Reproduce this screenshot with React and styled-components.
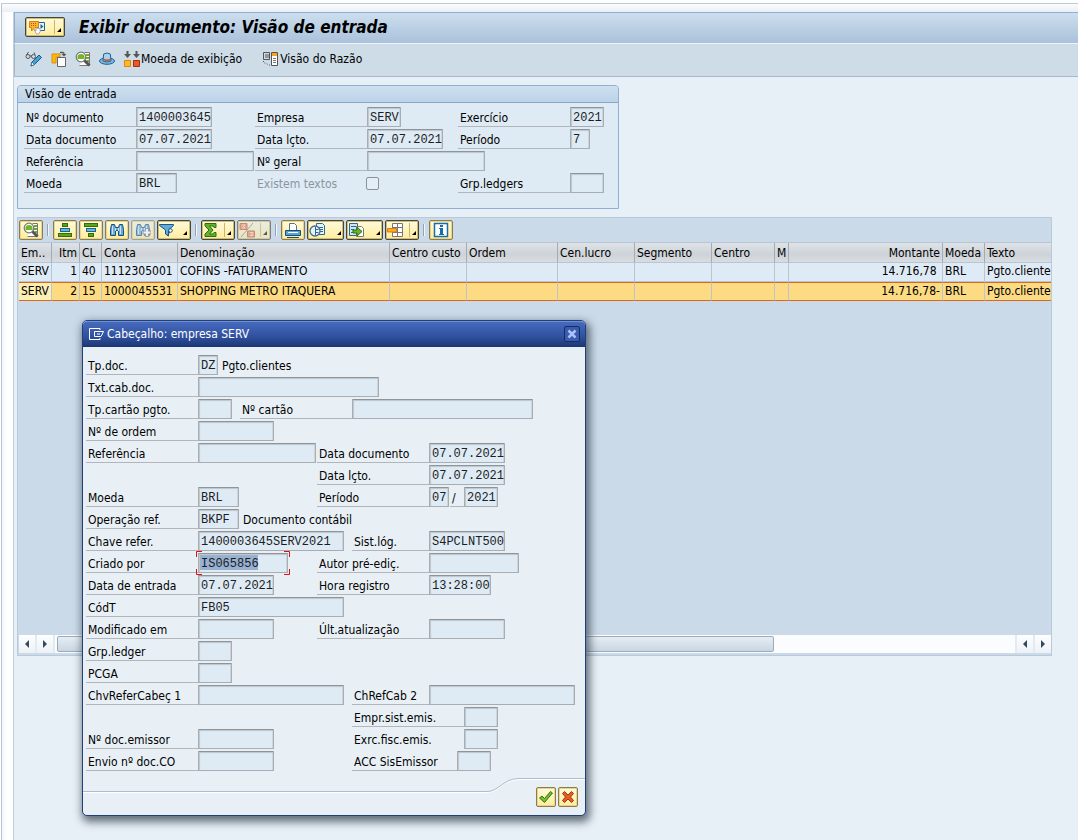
import React from "react";
import styled, { createGlobalStyle, css } from "styled-components";

const Global = createGlobalStyle`
  *, *::before, *::after { box-sizing: border-box; }
  body {
    margin: 0;
    background: #e8f0f7;
    color: #000;
    font: 12px/16px "DejaVu Sans Condensed", "Noto Sans", sans-serif;
  }
  button, input { font: inherit; color: inherit; }
`;

/* ---------- page frame ---------- */

const Page = styled.div`
  position: relative;
  display: flex;
  flex-direction: column;
  min-height: 100vh;
  padding: 3px 0 0 1px;
  background: #fff;
`;

const Frame = styled.div`
  flex: 1;
  display: flex;
  padding: 8px 0 0 11px;
  border-top: 1px solid #c3c9d2;
  border-left: 1px solid #b9c2d0;
  background: linear-gradient(#fbfcfe, #e9eff6 8px, transparent 8px),
    linear-gradient(90deg, #f3f7fb, #fff 6px);
`;

const Window = styled.main`
  flex: 1;
  min-width: 0;
  border-left: 1px solid #c2cfdd;
  background: #e8f0f7;
`;

const TitleBar = styled.header`
  display: flex;
  align-items: center;
  gap: 14px;
  height: 31px;
  padding: 0 10px 2px;
  border: 1px solid #93aecb;
  border-width: 1px 0 0 1px;
  background: linear-gradient(#cddfee, #aac1db);
`;

const Title = styled.h1`
  margin: 0;
  font-size: 17px;
  line-height: 20px;
  font-weight: bold;
  font-style: italic;
  white-space: nowrap;
`;

const AppBar = styled.nav`
  display: flex;
  align-items: center;
  gap: 8px;
  height: 34px;
  padding: 0 10px 2px;
  border: 1px solid #a5b9cd;
  border-top-color: #eef4f9;
  border-right: 0;
  background: #cedce8;
`;

const FlatButton = styled.button`
  display: flex;
  align-items: center;
  gap: ${(p) => p.$gap || 0}px;
  margin-right: ${(p) => (p.$wide ? 12 : 0)}px;
  padding: 0;
  border: 0;
  background: none;
  white-space: nowrap;
`;

const Content = styled.div`
  display: flex;
  flex-direction: column;
  align-items: flex-start;
  gap: 8px;
  padding: 8px 26px 0 3px;
`;

/* ---------- yellow buttons ---------- */

const YellowButton = styled.button`
  display: flex;
  align-items: center;
  justify-content: center;
  width: ${(p) => p.$w || 24}px;
  height: 20px;
  padding: 0;
  border: 1px solid ${(p) => (p.$dark ? "#4a4636" : "#8b7c50")};
  border-radius: 2px;
  background: linear-gradient(#fffbdc, #ffec9c);
  box-shadow: inset 0 0 0 1px ${(p) => (p.$dark ? "#cdbb78" : "#e8d48a")};
  opacity: ${(p) => (p.disabled ? 0.6 : 1)};
`;

const SplitMark = styled.span`
  display: flex;
  align-items: flex-end;
  justify-content: flex-end;
  width: 9px;
  height: 14px;
  margin-left: ${(p) => p.$gap || 0}px;
  padding: 0 2px 2px 0;
  border-left: 1px solid ${(p) => (p.$line ? "#c9b469" : "transparent")};

  &::after {
    content: "";
    border: 2px solid #000;
    border-top-color: transparent;
    border-left-color: transparent;
  }
`;

/* ---------- form fields on a 7px character grid ---------- */

const Fields = styled.div`
  display: grid;
  grid-template-columns: repeat(${(p) => p.$cols}, 7px);
  grid-auto-rows: 20px;
  row-gap: 2px;
`;

const Label = styled.label`
  grid-row: ${(p) => p.$row};
  grid-column: ${(p) => p.$at + 1} / span ${(p) => p.$span};
  padding: 3px 0 0 2px;
  border-bottom: 1px solid ${(p) => (p.$plain ? "transparent" : "#b2b6ba")};
  color: ${(p) => (p.$dim ? "#8b959f" : "#000")};
  white-space: nowrap;
`;

const Input = styled.input`
  grid-row: ${(p) => p.$row};
  grid-column-start: ${(p) => p.$at + 1};
  width: ${(p) => p.$chars * 7 + 6}px;
  height: 20px;
  padding: 1px 0 0 2px;
  border: 1px solid #a9adb1;
  border-top-color: #8f9498;
  border-radius: 1px;
  outline: 0;
  background-color: #deebf5;
  box-shadow: inset 1px 1px 1px #bcc6ce, inset -1px 0 0 #cdd6dd;
  color: #1c1c24;
  font-family: "Liberation Mono", monospace;
  font-size: 12px;
  ${(p) =>
    p.$selected &&
    css`
      background-image: linear-gradient(#97b1d1, #97b1d1);
      background-repeat: no-repeat;
      background-position: 1px 1px;
      background-size: 58px 15px;
    `}
`;

const Note = styled.span`
  grid-row: ${(p) => p.$row};
  grid-column-start: ${(p) => p.$at + 1};
  padding: 3px 0 0 3px;
  white-space: nowrap;
`;

const Tick = styled.input`
  appearance: none;
  grid-row: ${(p) => p.$row};
  grid-column-start: ${(p) => p.$at + 1};
  width: 13px;
  height: 13px;
  margin: 4px 0 0 -1px;
  border: 1px solid #8d9297;
  border-radius: 2px;
  background: #e3eef6;
`;

const FocusFrame = styled.span`
  grid-row: ${(p) => p.$row};
  grid-column-start: ${(p) => p.$at + 1};
  width: 94px;
  height: 24px;
  margin: -2px;
  pointer-events: none;
  z-index: 1;

  svg { display: block; }
`;

function Field({ id, row, at, span, text, inputAt, chars, value = "", selected, plain }) {
  return (
    <>
      <Label htmlFor={id} $row={row} $at={at} $span={span} $plain={plain}>{text}</Label>
      <Input id={id} readOnly value={value} $row={row} $at={inputAt ?? at + span} $chars={chars} $selected={selected} />
    </>
  );
}

const Group = styled.section`
  padding-bottom: 15px;
  border: 1px solid #8fb0d0;
  border-radius: 4px 4px 0 0;
  background: #deeaf4;
`;

const GroupTitle = styled.h2`
  height: 17px;
  margin: 0 0 4px;
  padding: 0 7px;
  border-bottom: 1px solid #86a8ca;
  border-radius: 3px 3px 0 0;
  background: linear-gradient(#cfe0ef, #bcd3e8);
  font-size: 12px;
  line-height: 16px;
  font-weight: normal;
`;

const GroupBody = styled.div`
  padding: 0 6px;
`;

/* ---------- line item grid ---------- */

const GridPanel = styled.section`
  width: 100%;
  padding-left: 1px;
  border: 1px solid #b9c9d9;
  background: #cbdae9;
`;

const GridBar = styled.div`
  display: flex;
  align-items: center;
  gap: 2px;
  height: 25px;
  border-bottom: 1px solid #b7c6d6;
`;

const Divider = styled.span`
  width: 2px;
  height: 12px;
  margin: 0 2px;
  border-left: 1px solid #93a3b3;
  border-right: 1px solid #f1f6fb;
`;

const Table = styled.table`
  width: 100%;
  table-layout: fixed;
  border-collapse: separate;
  border-spacing: 0;

  th, td {
    padding: 0 2px;
    overflow: hidden;
    font-weight: normal;
    text-align: left;
    white-space: pre;
    text-overflow: clip;
    border-right: 1px solid #b9c6d2;
  }
  th:last-child, td:last-child { border-right: 0; }
`;

const HeadCell = styled.th`
  height: 20px;
  border-bottom: 1px solid #b9c6d2;
  background: linear-gradient(#dfe3e7, #cdd3d9 60%, #d9dde1);
  && {
    text-align: ${(p) => (p.$right ? "right" : "left")};
    border-right-color: #a3acb5;
  }
`;

const Cell = styled.td`
  && { text-align: ${(p) => (p.$right ? "right" : "left")}; }
`;

const Row = styled.tr`
  td {
    height: 19px;
    line-height: 16px;
    padding-bottom: ${(p) => (p.$active ? 1 : 2)}px;
    background: ${(p) => (p.$active ? "#fcdb83" : "#deebf6")};
    border-top: ${(p) => (p.$active ? "1px solid #d9681f" : "0")};
    border-bottom: 1px solid ${(p) => (p.$active ? "#d9681f" : "#b9c6d2")};
  }
  td:first-child { background: ${(p) => (p.$active ? "#fdeeb4" : "#deebf6")}; }
`;

const GridSpace = styled.div`
  height: 334px;
`;

const ScrollBar = styled.div`
  display: flex;
  gap: 2px;
  height: 18px;
  margin-bottom: 2px;
  background: #e2eaf2;
`;

const ScrollButton = styled.button`
  display: flex;
  align-items: center;
  justify-content: center;
  width: 16px;
  height: 18px;
  padding: 0;
  border: 0;
  background: linear-gradient(#fdfeff, #edf2f7);
`;

const Track = styled.div`
  flex: 1;
  padding: 1px 2px;
  background: #fbfcfe;
`;

const Thumb = styled.div`
  width: 75%;
  height: 16px;
  border: 1px solid #9dabb9;
  border-radius: 2px;
  background: linear-gradient(#e6edf4, #c9d6e2);
`;

/* ---------- dialog ---------- */

const Dialog = styled.section`
  position: absolute;
  left: 82px;
  top: 320px;
  width: 504px;
  border: 1px solid #213f7d;
  border-radius: 5px;
  background: #e8f0f6;
  box-shadow: 2px 4px 9px 2px rgba(40, 55, 70, 0.7);
`;

const DialogTitle = styled.header`
  display: flex;
  align-items: center;
  gap: 2px;
  height: 26px;
  padding: 0 5px 2px 6px;
  border-top: 1px solid #7090d0;
  border-radius: 4px 4px 0 0;
  background: linear-gradient(#466abf, #2f509d 60%, #1c3674);
  color: #fff;

  h2 {
    flex: 1;
    margin: 0;
    font-size: 12px;
    font-weight: normal;
  }
`;

const CloseButton = styled.button`
  display: flex;
  align-items: center;
  justify-content: center;
  width: 16px;
  height: 16px;
  padding: 0;
  border: 1px solid #142c66;
  border-radius: 2px;
  background: #3a5cab;
`;

const DialogBody = styled.div`
  padding: 8px 3px 7px;
`;

const Footer = styled.footer`
  display: flex;
  height: 37px;
`;

const FooterLine = styled.div`
  flex: 1;
  margin-top: 13px;
  border-top: 1px solid #aebccd;
  box-shadow: inset 0 1px 0 #fff;
`;

const FooterActions = styled.div`
  display: flex;
  gap: 2px;
  padding: 8px 7px 0 17px;
  border-top: 1px solid #aebccd;
  box-shadow: inset 0 1px 0 #fff;
`;

/* ---------- icons ---------- */

const Svg = ({ w = 16, h = 16, children }) => (
  <svg width={w} height={h} viewBox={`0 0 ${w} ${h}`} fill="none" aria-hidden="true">{children}</svg>
);

const MenuIcon = () => (
  <Svg w={18}>
    <path d="M10.500 3.500h6v8h-6z" fill="#e9f4fb" stroke="#16689f" />
    <path d="M12.500 5l3 2.500-3 2.500z" fill="#16689f" />
    <path d="M1.500 2.500h9v6H7L3.500 12V8.500h-2z" fill="#fbb62c" stroke="#e07a12" />
    <path d="M3 4.500h1m1 0h1m1 0h1M3 6.500h1m1 0h1m1 0h1" stroke="#b5570a" />
    <path d="M6 10.500l2 1.500V8.500l1.500 1 1.500-.5 1.500 3-2 3H8.500z" fill="#fff" stroke="#888" strokeWidth=".7" />
  </Svg>
);
const GlassesIcon = () => (
  <Svg w={18}>
    <path d="M1.500 4l2-3M10 4L9 1.500M5 5h2" stroke="#555" />
    <circle cx="3" cy="5.500" r="2" stroke="#555" /><circle cx="8.500" cy="5.500" r="2" stroke="#555" />
    <path d="M6 15l1-4 7-7 2.500 2.500-7 7z" fill="#4ba0cf" stroke="#155b8c" />
    <path d="M6 15l1-4 2.500 2.500z" fill="#fff" stroke="#155b8c" strokeWidth=".7" />
  </Svg>
);
const OtherDocIcon = () => (
  <Svg>
    <path d="M1 3h8v3H5v6H1z" fill="#fdb913" stroke="#e38b00" />
    <path d="M6.500 6.500h8v9h-8z" fill="#fff" stroke="#666" />
    <path d="M9 1.500h3q1 0 1 2" stroke="#555" strokeWidth="1.400" /><path d="M10.500 3h5L13 5.500z" fill="#555" />
  </Svg>
);
const DetailIcon = () => (
  <Svg>
    <path d="M9.500 1.500h5v13h-10" fill="#fff" stroke="#777" />
    <path d="M11 4h3m-3 3h3m-2 3h2" stroke="#73a82d" strokeWidth="2" />
    <circle cx="6" cy="6" r="4.800" fill="#fff" stroke="#777" strokeWidth="1.200" />
    <path d="M2.500 5.500q0-2.500 3.500-2.500t3.500 2.500v2.500h-7z" fill="#72b72b" />
    <path d="M9.500 9.500l5 5" stroke="#555" strokeWidth="3" />
  </Svg>
);
const HatIcon = () => (
  <Svg>
    <ellipse cx="8" cy="10" rx="7.500" ry="3.300" fill="#78b7df" stroke="#17659a" />
    <path d="M4 10l.7-7q3.300-2 6.600 0l.7 7q-4 2-8 0z" fill="#a9d3ed" stroke="#17659a" />
    <path d="M4.500 8.500q3.500 1.500 7 0" stroke="#d34c27" strokeWidth="1.600" />
  </Svg>
);
const CurrencyIcon = () => (
  <Svg w={18}>
    <path d="M4.500 0v4M13.500 0v4" stroke="#555" strokeWidth="2" />
    <path d="M1 3h7L4.500 7zM10 3h7l-3.500 4z" fill="#555" />
    <path d="M1.500 9.500h6v6h-6z" fill="#fdb92c" stroke="#df8500" />
    <path d="M10.500 9.500h6v6h-6z" fill="#e65c22" stroke="#a62c0c" />
  </Svg>
);
const LedgerIcon = () => (
  <Svg>
    <path d="M1.500 1.500h6v7h-6zM3 4h4M3 6h4" stroke="#555" />
    <path d="M9.500 1.500h6v13h-6z" fill="#fff" stroke="#555" /><path d="M10 2h5v3h-5z" fill="#f8a51b" />
    <path d="M11 7.500h3m-3 2h3m-3 2h3" stroke="#777" />
    <path d="M1.500 10v1.500l7 3" stroke="#555" strokeDasharray="1 1.500" />
  </Svg>
);
const Bars = ({ ys, ws }) => (
  <Svg>
    {ys.map((y, i) => (
      <rect key={y} x={8 - ws[i] / 2} y={y + 0.5} width={ws[i]} height="3" fill={i === 1 ? "#6cb6dd" : "#58a51e"} stroke={i === 1 ? "#1a648f" : "#2e6d10"} />
    ))}
  </Svg>
);
const BinocularsIcon = ({ more }) => (
  <Svg>
    <path d="M2.500 2.500h3l1 3h3l1-3h3l1 5v6h-5v-5h-3v5h-5v-6z" fill="#69acd8" stroke="#164f7d" />
    <path d="M3.500 4v8m3-6v3m3-3v3m2-5v8" stroke="#c8e4f4" />
    {more && <path d="M12 6v9M7.500 10.500h9" stroke="#777" strokeWidth="4" />}
    {more && <path d="M12 7v7M8.500 10.500h7" stroke="#fff" strokeWidth="2" />}
  </Svg>
);
const FilterIcon = () => (
  <Svg>
    <path d="M.5 2.500h14v1L9.500 8v6l-3-2V8L.5 3.500z" fill="#62aadb" stroke="#175887" />
    <circle cx="11.500" cy="8.500" r="1.800" fill="#fff" stroke="#175887" /><path d="M10.500 10l-2 4" stroke="#175887" />
  </Svg>
);
const SumIcon = () => (
  <Svg><path d="M2 1.500h11v4h-2l-1-1.500H6.500L10 8l-3.500 4H10l1-1.500h2v4H2v-2.500L6 8 2 4z" fill="#62b12b" stroke="#2d6e0f" /></Svg>
);
const SubtotalIcon = () => (
  <Svg>
    <path d="M1 1.500h7v6H1zM8.500 9h7v6h-7z" fill="#f28b50" stroke="#cc5420" />
    <path d="M3 3h3L4.500 4.500 6 6H3m8 4.500h3L12.500 12l1.500 1.500h-3" stroke="#fbd5b8" />
    <path d="M14 1L2 15" stroke="#888" />
  </Svg>
);
const PrintIcon = () => (
  <Svg>
    <path d="M4.500 8V1.500h5l2 2V8" fill="#fff" stroke="#5c7288" />
    <path d="M.5 8.500h15v5H.5z" fill="#5aa3d3" stroke="#174f7a" /><path d="M3 10.500h10" stroke="#fff" />
    <path d="M2 15.500h12" stroke="#174f7a" />
  </Svg>
);
const ViewIcon = () => (
  <Svg w={17}>
    <path d="M7.500 1.500h6l2 2v9h-8z" fill="#e6f3fb" stroke="#236b9d" /><path d="M10 5.500h4m-3 2h3m-3 2h3" stroke="#236b9d" />
    <circle cx="6" cy="9" r="5" fill="#e4f2fa" stroke="#4b6d85" strokeWidth="1.300" />
    <path d="M6.500 5v8" stroke="#236b9d" /><path d="M7 7.500h2.500M7 10.500h2.500" stroke="#236b9d" />
  </Svg>
);
const ExportIcon = () => (
  <Svg w={17}>
    <path d="M1.500 1.500h8v12h-8z" fill="#cee6f4" stroke="#236b9d" /><path d="M3 4.500h5M3 7.500h3M3 10.500h2" stroke="#236b9d" />
    <path d="M8.500 4.500h5l2 2v8h-7z" fill="#fff" stroke="#777" />
    <path d="M5 8h4V5l5 4.500L9 14v-3H5z" fill="#68b52c" stroke="#2c710e" />
  </Svg>
);
const LayoutIcon = () => (
  <Svg w={17}>
    <path d="M5.500 1.500h10v13h-10zM10.500 1v13M5 5.500h11M5 10.500h11" fill="#fff" stroke="#777" />
    <path d="M.5 6.500h9v3.500h-9z" fill="#fbae26" stroke="#df7b0b" />
  </Svg>
);
const InfoIcon = () => (
  <Svg>
    <path d="M1.500 1.500h13v13h-13z" fill="#fff" stroke="#156eaa" strokeWidth="1.500" />
    <path d="M7 3h3v2H7zM6 6h4v6h1v1H6v-1h1V7H6z" fill="#156eaa" />
  </Svg>
);
const DialogIcon = () => (
  <Svg>
    <path d="M11 4V2.500H.5v11H11V12" stroke="#fff" /><path d="M14.500 5.500h-9v5H12z" stroke="#fff" /><path d="M8 8h3" stroke="#fff" />
  </Svg>
);
const CrossIcon = () => (
  <Svg w={10} h={10}><path d="M1.500 1.500l7 7M8.500 1.500l-7 7" stroke="#a9c4ff" strokeWidth="2.500" /></Svg>
);
const OkIcon = () => (
  <Svg><path d="M1.500 9l2.500-2 2.500 2.500L12.500 2.500l2 1.500-8 9.500z" fill="#75bd2e" stroke="#347512" /></Svg>
);
const CancelIcon = () => (
  <Svg><path d="M2.500 4.500l2-2L8 6l3.500-3.500 2 2L10.500 8l3 3.500-2 2L8 10l-3.500 3.500-2-2 3-3.500z" fill="#e55b22" stroke="#a5330d" /></Svg>
);
const Arrow = ({ right }) => (
  <Svg w={6} h={8}><path d={right ? "M1 0l4 4-4 4z" : "M5 0L1 4l4 4z"} fill="#34495c" /></Svg>
);

/* ---------- data ---------- */

const columns = [
  ["Em‥", 33], ["Itm", 28, true], ["CL", 22], ["Conta", 76], ["Denominação", 212], ["Centro custo", 77],
  ["Ordem", 91], ["Cen.lucro", 77], ["Segmento", 77], ["Centro", 63], ["M", 14], ["Montante", 154, true],
  ["Moeda", 42], ["Texto", null],
];

const items = [
  ["SERV", "1", "40", "1112305001", "COFINS -FATURAMENTO", "", "", "", "", "", "", "14.716,78\u00a0", "BRL", "Pgto.clientes"],
  ["SERV", "2", "15", "1000045531", "SHOPPING METRO ITAQUERA", "", "", "", "", "", "", "14.716,78-", "BRL", "Pgto.clientes"],
];

const headerFields = [
  { row: 1, at: 0, span: 16, text: "Nº documento", chars: 10, value: "1400003645" },
  { row: 1, at: 33, span: 16, text: "Empresa", chars: 4, value: "SERV" },
  { row: 1, at: 62, span: 16, text: "Exercício", chars: 4, value: "2021" },
  { row: 2, at: 0, span: 16, text: "Data documento", chars: 10, value: "07.07.2021" },
  { row: 2, at: 33, span: 16, text: "Data lçto.", chars: 10, value: "07.07.2021" },
  { row: 2, at: 62, span: 16, text: "Período", chars: 2, value: "7" },
  { row: 3, at: 0, span: 16, text: "Referência", chars: 16 },
  { row: 3, at: 33, span: 16, text: "Nº geral", chars: 16 },
  { row: 4, at: 0, span: 16, text: "Moeda", chars: 5, value: "BRL" },
  { row: 4, at: 62, span: 16, text: "Grp.ledgers", chars: 4 },
];

const dialogFields = [
  { row: 1, at: 0, span: 16, text: "Tp.doc.", chars: 2, value: "DZ" },
  { row: 2, at: 0, span: 16, text: "Txt.cab.doc.", chars: 25 },
  { row: 3, at: 0, span: 16, text: "Tp.cartão pgto.", chars: 4 },
  { row: 3, at: 22, span: 16, text: "Nº cartão", chars: 25 },
  { row: 4, at: 0, span: 16, text: "Nº de ordem", chars: 10 },
  { row: 5, at: 0, span: 16, text: "Referência", chars: 16 },
  { row: 5, at: 33, span: 16, text: "Data documento", chars: 10, value: "07.07.2021" },
  { row: 6, at: 33, span: 16, text: "Data lçto.", chars: 10, value: "07.07.2021" },
  { row: 7, at: 0, span: 16, text: "Moeda", chars: 5, value: "BRL" },
  { row: 7, at: 33, span: 16, text: "Período", chars: 2, value: "07" },
  { row: 7, at: 52, span: 2, text: "/", chars: 4, value: "2021" },
  { row: 8, at: 0, span: 16, text: "Operação ref.", chars: 5, value: "BKPF" },
  { row: 9, at: 0, span: 16, text: "Chave refer.", chars: 20, value: "1400003645SERV2021" },
  { row: 9, at: 38, span: 11, text: "Sist.lóg.", chars: 10, value: "S4PCLNT500" },
  { row: 10, at: 0, span: 16, text: "Criado por", chars: 12, value: "IS065856", selected: true },
  { row: 10, at: 33, span: 16, text: "Autor pré-ediç.", chars: 12 },
  { row: 11, at: 0, span: 16, text: "Data de entrada", chars: 10, value: "07.07.2021" },
  { row: 11, at: 33, span: 16, text: "Hora registro", chars: 8, value: "13:28:00" },
  { row: 12, at: 0, span: 16, text: "CódT", chars: 20, value: "FB05" },
  { row: 13, at: 0, span: 16, text: "Modificado em", chars: 10 },
  { row: 13, at: 33, span: 16, text: "Últ.atualização", chars: 10 },
  { row: 14, at: 0, span: 16, text: "Grp.ledger", chars: 4 },
  { row: 15, at: 0, span: 16, text: "PCGA", chars: 4 },
  { row: 16, at: 0, span: 16, text: "ChvReferCabeç 1", chars: 20 },
  { row: 16, at: 38, span: 11, text: "ChRefCab 2", chars: 20 },
  { row: 17, at: 38, span: 16, text: "Empr.sist.emis.", chars: 4 },
  { row: 18, at: 0, span: 16, text: "Nº doc.emissor", chars: 10 },
  { row: 18, at: 38, span: 16, text: "Exrc.fisc.emis.", chars: 4, plain: true },
  { row: 19, at: 0, span: 16, text: "Envio nº doc.CO", chars: 10 },
  { row: 19, at: 38, span: 15, text: "ACC SisEmissor", chars: 4 },
];

export default function App() {
  return (
    <Page>
      <Global />
      <Frame>
        <Window>
          <TitleBar>
            <YellowButton $w={40} $dark aria-label="Menu">
              <MenuIcon /><SplitMark $gap={8} $line />
            </YellowButton>
            <Title>Exibir documento: Visão de entrada</Title>
          </TitleBar>
          <AppBar>
            <FlatButton aria-label="Exibir/modificar"><GlassesIcon /></FlatButton>
            <FlatButton aria-label="Outro documento"><OtherDocIcon /></FlatButton>
            <FlatButton aria-label="Detalhe"><DetailIcon /></FlatButton>
            <FlatButton aria-label="Cabeçalho"><HatIcon /></FlatButton>
            <FlatButton $wide><CurrencyIcon />Moeda de exibição</FlatButton>
            <FlatButton $gap={2}><LedgerIcon />Visão do Razão</FlatButton>
          </AppBar>
          <Content>
            <Group>
              <GroupTitle>Visão de entrada</GroupTitle>
              <GroupBody>
                <Fields $cols={84}>
                  {headerFields.map((f, i) => <Field key={f.text} id={`head-${i}`} {...f} />)}
                  <Label htmlFor="has-text" $row={4} $at={33} $span={15} $plain $dim>Existem textos</Label>
                  <Tick id="has-text" type="checkbox" disabled $row={4} $at={49} />
                </Fields>
              </GroupBody>
            </Group>
            <GridPanel>
              <GridBar>
                <YellowButton aria-label="Detalhes"><DetailIcon /></YellowButton>
                <Divider />
                <YellowButton aria-label="Ordem crescente"><Bars ys={[1, 6, 11]} ws={[5, 9, 13]} /></YellowButton>
                <YellowButton aria-label="Ordem decrescente"><Bars ys={[1, 6, 11]} ws={[13, 9, 5]} /></YellowButton>
                <YellowButton aria-label="Procurar"><BinocularsIcon /></YellowButton>
                <YellowButton aria-label="Continuar procura" disabled><BinocularsIcon more /></YellowButton>
                <YellowButton $w={34} $dark aria-label="Filtro"><FilterIcon /><SplitMark $gap={5} /></YellowButton>
                <Divider />
                <YellowButton $w={34} $dark aria-label="Total"><SumIcon /><SplitMark $gap={5} $line /></YellowButton>
                <YellowButton $w={34} $dark aria-label="Subtotal" disabled><SubtotalIcon /><SplitMark $gap={5} $line /></YellowButton>
                <Divider />
                <YellowButton aria-label="Imprimir"><PrintIcon /></YellowButton>
                <YellowButton $w={37} $dark aria-label="Visões"><ViewIcon /><SplitMark $gap={8} /></YellowButton>
                <YellowButton $w={37} $dark aria-label="Exportar"><ExportIcon /><SplitMark $gap={8} /></YellowButton>
                <YellowButton $w={34} $dark aria-label="Layout"><LayoutIcon /><SplitMark $gap={5} $line /></YellowButton>
                <Divider />
                <YellowButton aria-label="Informação"><InfoIcon /></YellowButton>
              </GridBar>
              <Table>
                <colgroup>
                  {columns.map(([name, width]) => <col key={name} width={width ?? undefined} />)}
                </colgroup>
                <thead>
                  <tr>{columns.map(([name, , right]) => <HeadCell key={name} $right={right}>{name}</HeadCell>)}</tr>
                </thead>
                <tbody>
                  {items.map((item, r) => (
                    <Row key={item[1]} $active={r === 1}>
                      {item.map((value, c) => <Cell key={c} $right={columns[c][2]}>{value}</Cell>)}
                    </Row>
                  ))}
                </tbody>
              </Table>
              <GridSpace />
              <ScrollBar>
                <ScrollButton aria-label="Início"><Arrow /></ScrollButton>
                <ScrollButton aria-label="Avançar"><Arrow right /></ScrollButton>
                <Track><Thumb /></Track>
                <ScrollButton aria-label="Voltar"><Arrow /></ScrollButton>
                <ScrollButton aria-label="Fim"><Arrow right /></ScrollButton>
              </ScrollBar>
            </GridPanel>
          </Content>
        </Window>
      </Frame>

      <Dialog role="dialog" aria-labelledby="dialog-title">
        <DialogTitle>
          <DialogIcon />
          <h2 id="dialog-title">Cabeçalho: empresa SERV</h2>
          <CloseButton aria-label="Fechar"><CrossIcon /></CloseButton>
        </DialogTitle>
        <DialogBody>
          <Fields $cols={70}>
            {dialogFields.map((f, i) => <Field key={f.text} id={`doc-${i}`} {...f} />)}
            <Note $row={1} $at={19}>Pgto.clientes</Note>
            <Note $row={8} $at={22}>Documento contábil</Note>
            <FocusFrame $row={10} $at={16}>
              <Svg w={94} h={24}>
                <path d="M.5 6V.5H6M88 .5h5.500V6M.5 18v5.500H6M88 23.500h5.500V18" stroke="#e01010" />
              </Svg>
            </FocusFrame>
          </Fields>
        </DialogBody>
        <Footer>
          <FooterLine />
          <Svg w={32} h={16}>
            <path d="M0 14.500C12 14.500 16 1.500 32 1.500" stroke="#fff" />
            <path d="M0 13.500C12 13.500 16 .5 32 .5" stroke="#aebccd" />
          </Svg>
          <FooterActions>
            <YellowButton $w={20} aria-label="Confirmar"><OkIcon /></YellowButton>
            <YellowButton $w={20} aria-label="Cancelar"><CancelIcon /></YellowButton>
          </FooterActions>
        </Footer>
      </Dialog>
    </Page>
  );
}
